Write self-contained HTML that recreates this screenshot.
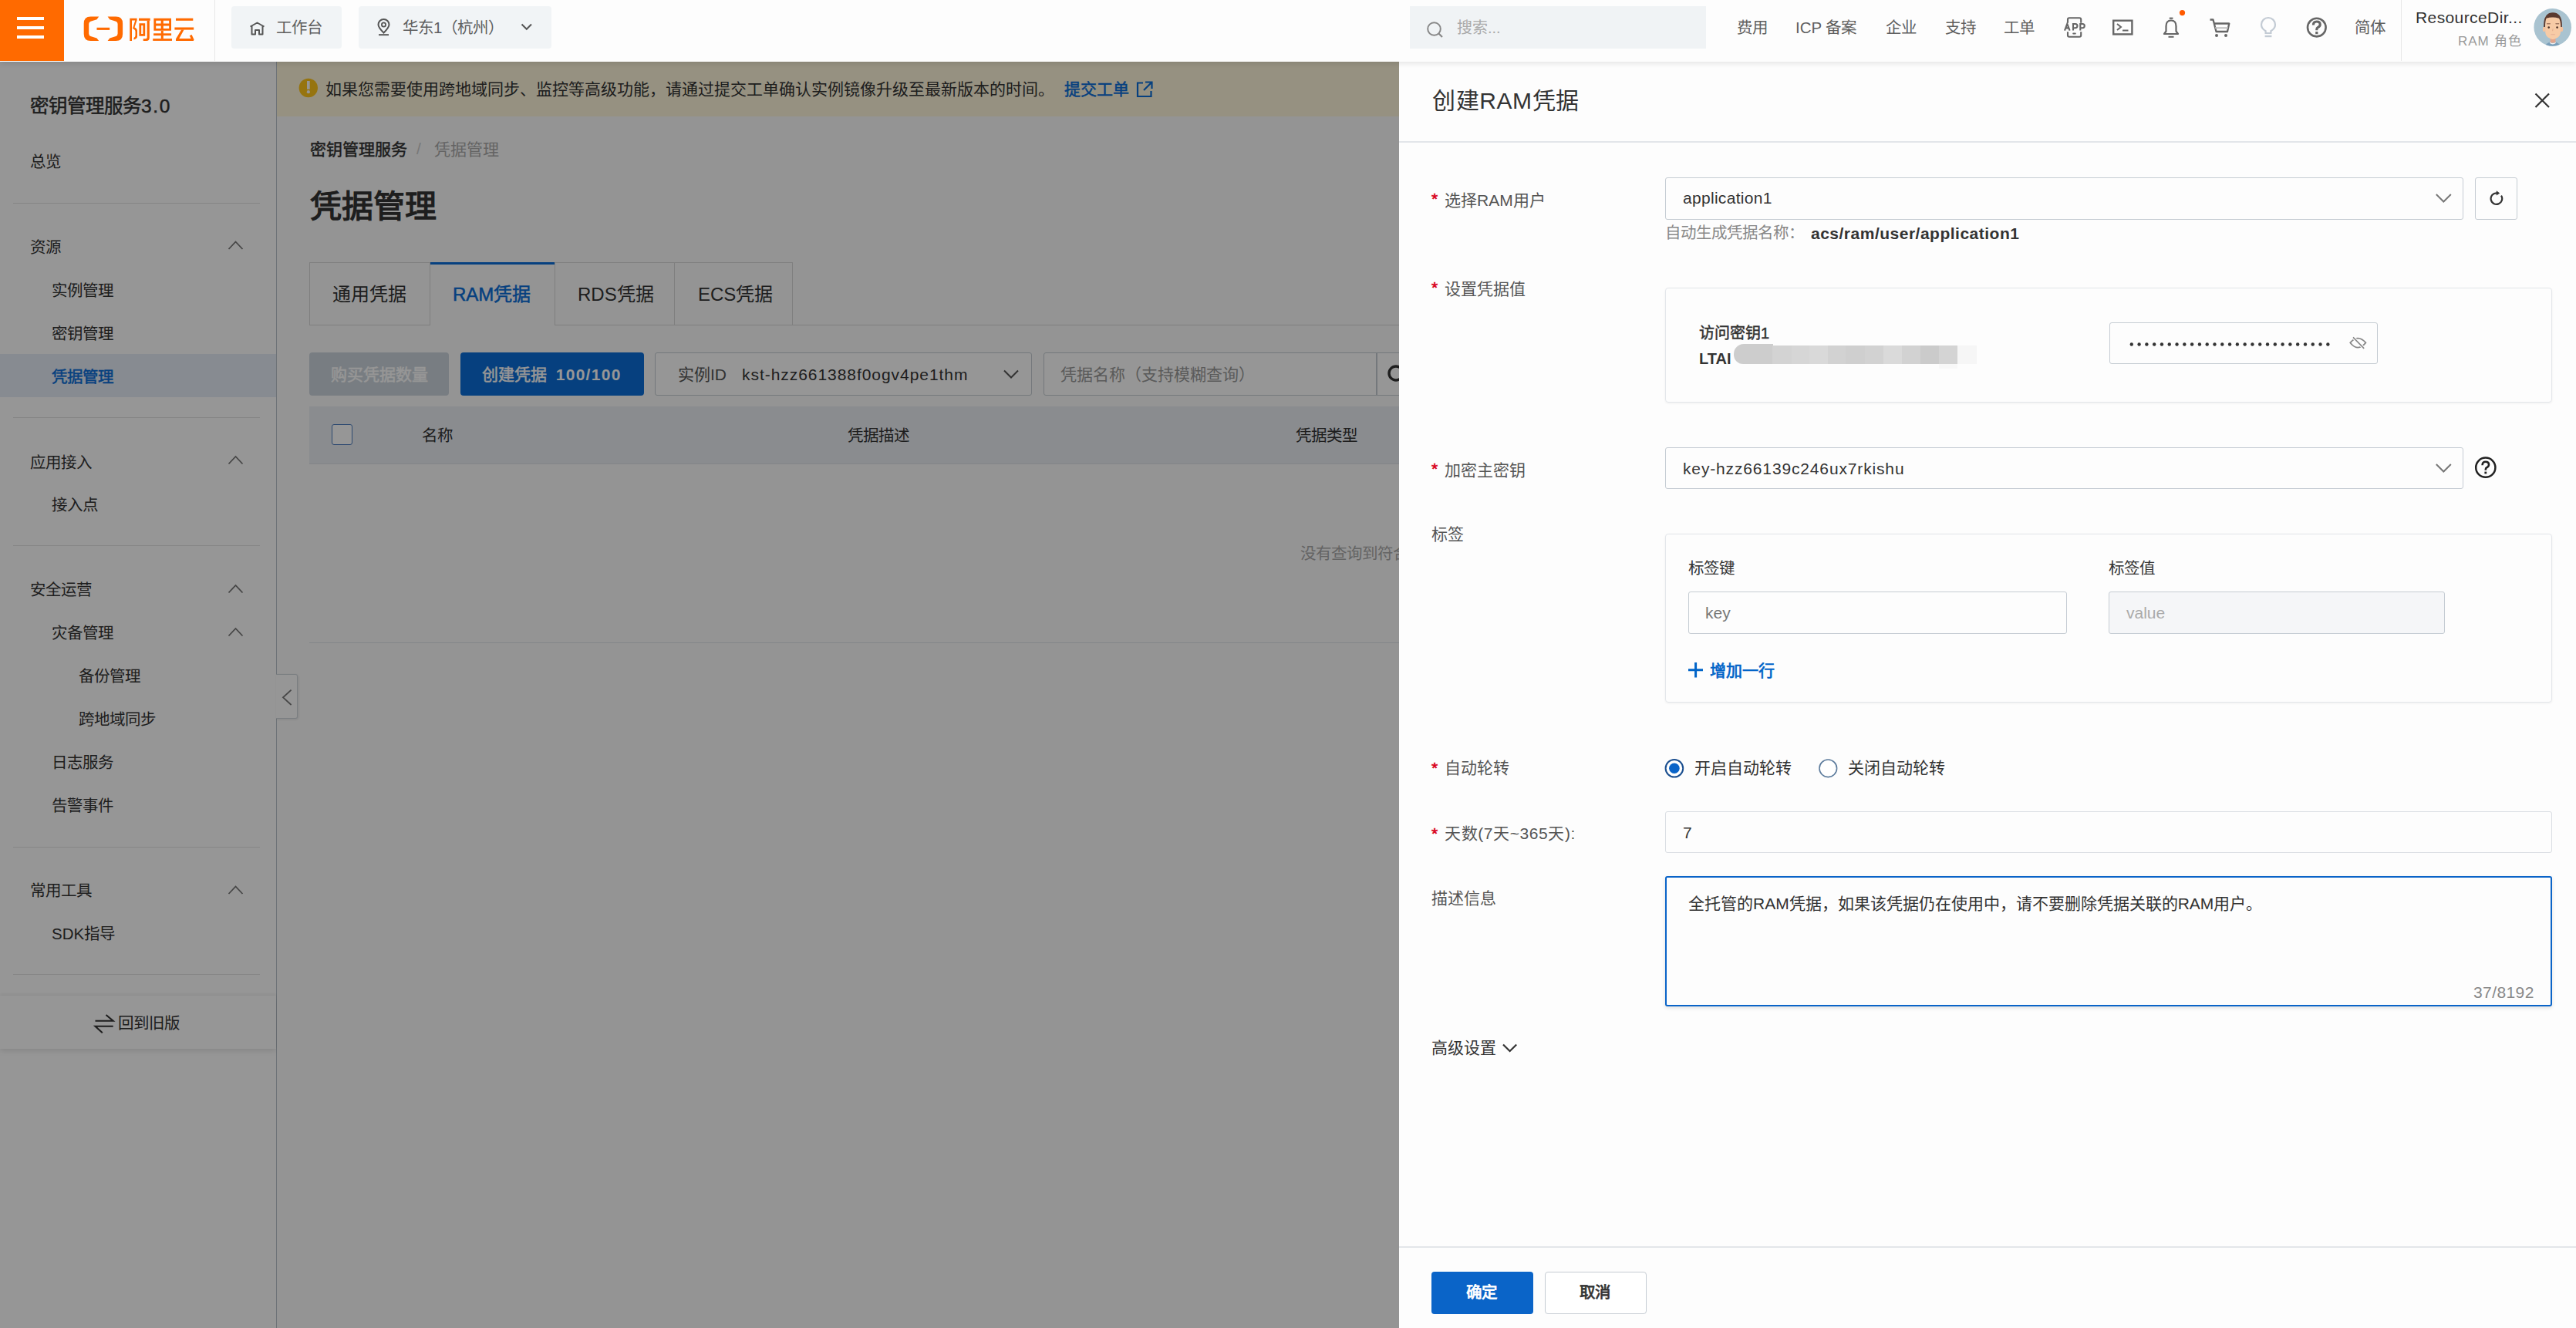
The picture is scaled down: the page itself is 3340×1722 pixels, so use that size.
<!DOCTYPE html>
<html lang="zh-CN"><head><meta charset="utf-8">
<style>
*{box-sizing:border-box;margin:0;padding:0}
html,body{width:3340px;height:1722px;overflow:hidden;background:#fff}
body{position:relative;font-family:"Liberation Sans",sans-serif;color:#333}
.a{position:absolute}
.t{position:absolute;white-space:nowrap;line-height:1}
svg{position:absolute;overflow:visible}
/* page under mask */
#page{position:absolute;left:0;top:0;width:3340px;height:1722px}
#side{position:absolute;left:0;top:0;width:359px;height:1722px;background:#fff;border-right:1px solid #bcc4cc}
#main{position:absolute;left:359px;top:79px;width:2981px;height:1643px;background:#fcfcfc}
#mask{position:absolute;left:0;top:79px;width:3340px;height:1643px;background:rgba(0,0,0,0.41)}
#top{position:absolute;left:0;top:0;width:3340px;height:79.5px;background:#fdfdfd;box-shadow:0 2px 7px rgba(0,0,0,0.11);z-index:5}
#drawer{position:absolute;left:1814px;top:79px;width:1526px;height:1643px;background:#fdfdfd;z-index:3}
</style></head><body>
<div id="page">
 <div id="side">
 <div class="t" id="sd_title" style="left:39px;top:126px;font-size:24.5px;-webkit-text-stroke-width:0.5px;color:#333">密钥管理服务<span style="letter-spacing:1.6px">3.0</span></div>
 <div class="t" style="left:39px;top:200px;font-size:20.5px;color:#333">总览</div>
 <div class="a" style="left:17px;top:263px;width:320px;height:1px;background:#e3e3e3"></div>
 <div class="t" style="left:39px;top:311px;font-size:20.5px;color:#333">资源</div>
 <div class="t" style="left:67px;top:367px;font-size:20.5px;color:#333">实例管理</div>
 <div class="t" style="left:67px;top:423px;font-size:20.5px;color:#333">密钥管理</div>
 <div class="a" style="left:0;top:459px;width:358px;height:56px;background:#e5ecf6"></div>
 <div class="t" style="left:67px;top:479px;font-size:20.5px;color:#0b6ed8;-webkit-text-stroke-width:0.5px">凭据管理</div>
 <div class="a" style="left:17px;top:541px;width:320px;height:1px;background:#e3e3e3"></div>
 <div class="t" style="left:39px;top:590px;font-size:20.5px;color:#333">应用接入</div>
 <div class="t" style="left:67px;top:645px;font-size:20.5px;color:#333">接入点</div>
 <div class="a" style="left:17px;top:707px;width:320px;height:1px;background:#e3e3e3"></div>
 <div class="t" style="left:39px;top:755px;font-size:20.5px;color:#333">安全运营</div>
 <div class="t" style="left:67px;top:811px;font-size:20.5px;color:#333">灾备管理</div>
 <div class="t" style="left:102px;top:867px;font-size:20.5px;color:#333">备份管理</div>
 <div class="t" style="left:102px;top:923px;font-size:20.5px;color:#333">跨地域同步</div>
 <div class="t" style="left:67px;top:979px;font-size:20.5px;color:#333">日志服务</div>
 <div class="t" style="left:67px;top:1035px;font-size:20.5px;color:#333">告警事件</div>
 <div class="a" style="left:17px;top:1098px;width:320px;height:1px;background:#e3e3e3"></div>
 <div class="t" style="left:39px;top:1145px;font-size:20.5px;color:#333">常用工具</div>
 <div class="t" style="left:67px;top:1201px;font-size:20.5px;color:#333">SDK指导</div>
 <div class="a" style="left:17px;top:1263px;width:320px;height:1px;background:#e3e3e3"></div>
 <div class="a" style="left:0;top:1291px;width:358px;height:69px;background:#fff;box-shadow:0 -2px 4px rgba(0,0,0,0.05),0 3px 7px rgba(0,0,0,0.1)"></div>
 <svg width="30" height="30" style="left:120px;top:1312px">
  <path d="M3.5,11.8 L26.7,11.8 L17.5,4 M26.7,18.7 L3.5,18.7 L12.8,27.2" fill="none" stroke="#333" stroke-width="2.1"/>
 </svg>
 <div class="t" style="left:153px;top:1317px;font-size:20.5px;color:#333">回到旧版</div>
 <svg width="360" height="1300" style="left:0;top:0">
  <g fill="none" stroke="#777" stroke-width="1.8">
   <path d="M296.5,323 L305.5,313.5 L314.5,323"/>
   <path d="M296.5,601.5 L305.5,592 L314.5,601.5"/>
   <path d="M296.5,768.5 L305.5,759 L314.5,768.5"/>
   <path d="M296.5,824.5 L305.5,815 L314.5,824.5"/>
   <path d="M296.5,1159 L305.5,1149.5 L314.5,1159"/>
  </g>
 </svg>
</div>
 <div id="main">
 <div class="a" style="left:0;top:0;width:2981px;height:72px;background:#fff7dc"></div>
 <svg width="30" height="30" style="left:25px;top:20px">
  <circle cx="15.8" cy="15" r="12.2" fill="#ffc61a"/>
  <rect x="14" y="6" width="3.7" height="10.8" fill="#fff"/>
  <circle cx="15.85" cy="20.2" r="2.1" fill="#fff"/>
 </svg>
 <div class="t" id="mn_banner" style="left:63px;top:26px;font-size:21px;color:#333">如果您需要使用跨地域同步、监控等高级功能，请通过提交工单确认实例镜像升级至最新版本的时间。</div>
 <div class="t" id="mn_link" style="left:1021px;top:26px;font-size:21px;color:#0b6ed8;-webkit-text-stroke-width:0.5px">提交工单</div>
 <svg width="30" height="30" style="left:1110px;top:22px">
  <path d="M13,6.5 L6,6.5 L6,24 L23.5,24 L23.5,17" fill="none" stroke="#0b6ed8" stroke-width="2.2"/>
  <path d="M16,5.5 L24.5,5.5 L24.5,14 M24.5,5.5 L14,16" fill="none" stroke="#0b6ed8" stroke-width="2.2"/>
 </svg>
 <div class="t" id="mn_bc1" style="left:43px;top:104px;font-size:21px;color:#333;-webkit-text-stroke-width:0.5px">密钥管理服务</div>
 <div class="t" style="left:181px;top:103px;font-size:21px;color:#ccc">/</div>
 <div class="t" id="mn_bc2" style="left:204px;top:104px;font-size:21px;color:#aaa">凭据管理</div>
 <div class="t" id="mn_title" style="left:43px;top:169px;font-size:41px;color:#333;font-weight:bold">凭据管理</div>
 <!-- tabs -->
 <div class="a" style="left:42px;top:261px;width:2939px;height:82px;border-bottom:1px solid #d9d9d9"></div>
 <div class="a" style="left:42px;top:261px;width:157px;height:82px;border:1px solid #d9d9d9;background:#fcfcfc"></div>
 <div class="a" style="left:199px;top:261px;width:161px;height:82px;border-top:3px solid #0b6ed8;background:#fcfcfc"></div>
 <div class="a" style="left:360px;top:261px;width:156px;height:82px;border:1px solid #d9d9d9;background:#fcfcfc"></div>
 <div class="a" style="left:515px;top:261px;width:154px;height:82px;border:1px solid #d9d9d9;background:#fcfcfc"></div>
 <div class="t" id="mn_tab1" style="top:291px;left:72px;font-size:24px;color:#333">通用凭据</div>
 <div class="t" id="mn_tab2" style="top:291px;left:228px;font-size:24px;color:#0b6ed8;-webkit-text-stroke-width:0.5px">RAM凭据</div>
 <div class="t" id="mn_tab3" style="top:291px;left:390px;font-size:24px;color:#333">RDS凭据</div>
 <div class="t" id="mn_tab4" style="top:291px;left:546px;font-size:24px;color:#333">ECS凭据</div>
 <!-- toolbar -->
 <div class="a" style="left:42px;top:378px;width:181px;height:56px;background:#cdd5dd;border-radius:4px"></div>
 <div class="t" id="mn_btn1" style="left:70px;top:396px;font-size:21px;color:#fff;-webkit-text-stroke-width:0.5px">购买凭据数量</div>
 <div class="a" style="left:238px;top:378px;width:238px;height:56px;background:#0b6ed8;border-radius:4px"></div>
 <div class="t" id="mn_btn2" style="left:266px;top:396px;font-size:21px;color:#fff;-webkit-text-stroke-width:0.5px">创建凭据&nbsp;&nbsp;<b style="letter-spacing:1.3px;-webkit-text-stroke-width:0">100/100</b></div>
 <div class="a" style="left:490px;top:378px;width:489px;height:56px;border:1.5px solid #c5ccd3;border-radius:3px;background:#fff"></div>
 <div class="t" id="mn_sel_l" style="left:520px;top:396px;font-size:21px;color:#555">实例ID</div>
 <div class="t" id="mn_sel_v" style="left:603px;top:396px;font-size:21px;letter-spacing:0.95px;color:#333">kst-hzz661388f0ogv4pe1thm</div>
 <svg width="30" height="30" style="left:938px;top:394px">
  <path d="M5,7.5 L14,16.5 L23,7.5" fill="none" stroke="#555" stroke-width="2"/>
 </svg>
 <div class="a" style="left:994px;top:378px;width:1987px;height:56px;border:1.5px solid #c5ccd3;border-radius:3px;background:#fff"></div>
 <div class="a" style="left:1425px;top:378px;width:1.5px;height:56px;background:#c5ccd3"></div>
 <div class="t" id="mn_srch" style="left:1016px;top:396px;font-size:21px;color:#999">凭据名称（支持模糊查询）</div>
 <svg width="40" height="40" style="left:1430px;top:388px">
  <circle cx="21" cy="17" r="9" fill="none" stroke="#333" stroke-width="3.4"/>
 </svg>
 <!-- table -->
 <div class="a" style="left:42px;top:448px;width:2939px;height:75px;background:#ebeff3;border-bottom:1px solid #dfe3e8"></div>
 <div class="a" style="left:71px;top:471px;width:27px;height:27px;border:1.8px solid #4d7cbf;border-radius:3px;background:#fff"></div>
 <div class="t" id="mn_th1" style="left:188px;top:476px;font-size:20.5px;color:#333">名称</div>
 <div class="t" id="mn_th2" style="left:740px;top:476px;font-size:20.5px;color:#333">凭据描述</div>
 <div class="t" id="mn_th3" style="left:1321px;top:476px;font-size:20.5px;color:#333">凭据类型</div>
 <div class="t" id="mn_empty" style="left:1327px;top:629px;font-size:20.5px;color:#aaa">没有查询到符合条件的记录</div>
 <div class="a" style="left:42px;top:754px;width:2939px;height:1px;background:#dfe3e8"></div>
 <!-- collapse handle -->
 <div class="a" style="left:-1px;top:795px;width:28px;height:58px;background:#fff;border:1px solid #d0d6dc;border-left:none;border-radius:0 3px 3px 0;box-shadow:1px 1px 3px rgba(0,0,0,0.1)"></div>
 <svg width="20" height="30" style="left:5px;top:810px">
  <path d="M13.6,5.6 L3,15.3 L13.6,25" fill="none" stroke="#777" stroke-width="1.8"/>
 </svg>
</div>
 <div id="mask"></div>
</div>

<div id="top">
 <div class="a" style="left:0;top:0;width:83px;height:79px;background:#ff6a00"></div>
 <div class="a" style="left:22px;top:22px;width:35px;height:3.5px;background:#fff"></div>
 <div class="a" style="left:22px;top:34px;width:35px;height:3.5px;background:#fff"></div>
 <div class="a" style="left:22px;top:46px;width:35px;height:3.5px;background:#fff"></div>
 <svg width="3340" height="79" style="left:0;top:0">
  <g fill="#ff6a00">
   <path d="M128.2,21.5 L117.5,21.5 Q108.7,21.5 108.7,30.5 L108.7,44 Q108.7,53 117.5,53 L128.2,53 L125.5,49.5 L117.5,47 Q115.2,46 115.2,43.5 L115.2,31 Q115.2,28.5 117.5,27.8 L125.5,25.2 Z"/>
   <path transform="translate(267.8,0) scale(-1,1)" d="M128.2,21.5 L117.5,21.5 Q108.7,21.5 108.7,30.5 L108.7,44 Q108.7,53 117.5,53 L128.2,53 L125.5,49.5 L117.5,47 Q115.2,46 115.2,43.5 L115.2,31 Q115.2,28.5 117.5,27.8 L125.5,25.2 Z"/>
   <rect x="125.5" y="35.8" width="16.7" height="3.1"/>
   <!-- 阿 -->
   <path d="M168.3,23.7 L177.6,23.7 L177.6,26.2 L174.5,35.5 Q178,37 178,40 L178,47.5 Q178,50 173.5,51.5 L173.5,49 Q175.5,48 175.5,46 L175.5,41 Q175.5,38.5 172,37 L175.2,26.4 L171,26.4 L171,52.9 L168.3,52.9 Z"/>
   <rect x="180" y="23.7" width="14.7" height="3.1"/>
   <path d="M190.7,26.8 L193.8,26.8 L193.8,49 Q193.8,52.9 189.8,52.9 L185.7,52.9 L185.7,50.3 L189,50.3 Q190.7,50.3 190.7,48.5 Z"/>
   <path fill-rule="evenodd" d="M180.4,30.2 L188.2,30.2 L188.2,46.7 L180.4,46.7 Z M183.2,33 L183.2,44 L185.4,44 L185.4,33 Z"/>
   <!-- 里 -->
   <path fill-rule="evenodd" d="M199.4,23.7 L222,23.7 L222,39.8 L199.4,39.8 Z M202.2,26.8 L202.2,30.5 L208.7,30.5 L208.7,26.8 Z M211.8,26.8 L211.8,30.5 L219.2,30.5 L219.2,26.8 Z M202.2,33.6 L202.2,37 L208.7,37 L208.7,33.6 Z M211.8,33.6 L211.8,37 L219.2,37 L219.2,33.6 Z"/>
   <rect x="208.8" y="39.8" width="3" height="10.5"/>
   <rect x="199.1" y="43.3" width="23" height="2.8"/>
   <rect x="198.2" y="50.1" width="24.8" height="2.8"/>
   <!-- 云 -->
   <rect x="228" y="23.7" width="22.3" height="3.1"/>
   <rect x="226.4" y="35.5" width="24.8" height="3.1"/>
   <path d="M235.2,38.6 L238.6,38.6 L232.3,50 L247.6,50 L245.8,46.2 L248.6,45 L251.6,51.5 L250.8,52.9 L228,52.9 L228,50.5 Z"/>
  </g>
 </svg>
 <div class="a" style="left:278px;top:0;width:1px;height:79px;background:#e8e8e8"></div>
 <!-- workbench -->
 <div class="a" style="left:300px;top:8px;width:143px;height:55px;background:#f1f4f6;border-radius:4px"></div>
 <svg width="30" height="30" style="left:318px;top:22px">
  <path d="M6.5,12.5 L15.5,7.5 L24.5,12.5 M8.5,11.5 L8.5,22.5 L13,22.5 L13,17 L18,17 L18,22.5 L22.5,22.5 L22.5,11.5" fill="none" stroke="#555" stroke-width="2" stroke-linejoin="round"/>
 </svg>
 <div class="t" id="tb_wb" style="left:358px;top:26px;font-size:20.5px;color:#5f5f5f">工作台</div>
 <!-- region -->
 <div class="a" style="left:465px;top:8px;width:250px;height:55px;background:#f1f4f6;border-radius:4px"></div>
 <svg width="30" height="30" style="left:482px;top:21px">
  <path d="M15.5,21.5 Q8.5,14.5 8.5,11 A7,7 0 0 1 22.5,11 Q22.5,14.5 15.5,21.5 Z" fill="none" stroke="#555" stroke-width="2"/>
  <circle cx="15.5" cy="11" r="2.6" fill="none" stroke="#555" stroke-width="1.8"/>
  <rect x="9" y="23.2" width="13" height="1.9" fill="#555"/>
 </svg>
 <div class="t" id="tb_rg" style="left:522px;top:26px;font-size:20.5px;color:#5f5f5f">华东1（杭州）</div>
 <svg width="20" height="20" style="left:673px;top:26px">
  <path d="M3.5,5.5 L9.8,11.8 L16,5.5" fill="none" stroke="#555" stroke-width="2"/>
 </svg>
 <!-- search -->
 <div class="a" style="left:1828px;top:8px;width:384px;height:55px;background:#f0f3f5"></div>
 <svg width="30" height="30" style="left:1846px;top:24px">
  <circle cx="13.5" cy="13.5" r="8.3" fill="none" stroke="#888" stroke-width="2"/>
  <path d="M19.5,19.5 L24,24" stroke="#888" stroke-width="2.2"/>
 </svg>
 <div class="t" id="tb_sr" style="left:1889px;top:26px;font-size:20px;color:#aaa">搜索...</div>
 <div class="t" id="tb_n1" style="left:2252px;top:26px;font-size:20.5px;color:#5f5f5f">费用</div>
 <div class="t" id="tb_n2" style="left:2328px;top:26px;font-size:20.5px;color:#5f5f5f">ICP 备案</div>
 <div class="t" id="tb_n3" style="left:2445px;top:26px;font-size:20.5px;color:#5f5f5f">企业</div>
 <div class="t" id="tb_n4" style="left:2522px;top:26px;font-size:20.5px;color:#5f5f5f">支持</div>
 <div class="t" id="tb_n5" style="left:2598px;top:26px;font-size:20.5px;color:#5f5f5f">工单</div>
 <svg width="3340" height="79" style="left:0;top:0">
  <!-- APP -->
  <g fill="none" stroke="#666" stroke-width="2.1">
   <path d="M2681,29.8 L2681,25.2 Q2681,23.2 2683,23.2 L2696.2,23.2 Q2698.2,23.2 2698.2,25.2 L2698.2,29.8"/>
   <path d="M2681,41.2 L2681,45.7 Q2681,47.7 2683,47.7 L2696.2,47.7 Q2698.2,47.7 2698.2,45.7 L2698.2,41.2"/>
   <path d="M2677,39.6 L2680.3,30.8 L2683.6,39.6 M2678.4,36.4 L2682.2,36.4"/>
   <path d="M2688,39.6 L2688,31 L2690.8,31 Q2693.5,31 2693.5,33.6 Q2693.5,36.2 2690.8,36.2 L2688,36.2"/>
   <path d="M2697.3,39.6 L2697.3,31 L2700.1,31 Q2702.8,31 2702.8,33.6 Q2702.8,36.2 2700.1,36.2 L2697.3,36.2"/>
  </g>
  <rect x="2687.2" y="42.4" width="4.6" height="2" rx="1" fill="#666"/>
  <!-- terminal -->
  <rect x="2740.2" y="26.7" width="24.2" height="17.7" fill="none" stroke="#666" stroke-width="2.4"/>
  <path d="M2745,31 L2750,35 L2745,39" fill="none" stroke="#666" stroke-width="2"/>
  <rect x="2752" y="38.5" width="7.5" height="2" fill="#666"/>
  <!-- bell -->
  <path d="M2806,44 L2824,44 L2821.5,40.5 L2821.5,34 Q2821.5,26.5 2815,26.5 Q2808.5,26.5 2808.5,34 L2808.5,40.5 Z" fill="none" stroke="#666" stroke-width="2.2" stroke-linejoin="round"/>
  <rect x="2812.8" y="22.6" width="4.6" height="2.2" fill="#666"/>
  <rect x="2811.5" y="46.8" width="7" height="2" fill="#666"/>
  <circle cx="2829.5" cy="16.6" r="3.6" fill="#ff5a00"/>
  <!-- cart -->
  <path d="M2865.5,25.5 L2869.5,25.5 L2873.5,41 L2888,41 L2890.3,30.5 L2871,30.5" fill="none" stroke="#666" stroke-width="2.3" stroke-linejoin="round"/>
  <path d="M2872,36.2 L2889,36.2" stroke="#bbb" stroke-width="1.8"/>
  <circle cx="2874" cy="46" r="2" fill="#666"/>
  <circle cx="2886" cy="46" r="2" fill="#666"/>
  <!-- bulb -->
  <path d="M2937.6,43 L2937.6,40.2 Q2932,36.8 2932,32 A9,9 0 0 1 2950,32 Q2950,36.8 2944.4,40.2 L2944.4,43 Z" fill="none" stroke="#c3cbd4" stroke-width="2.2"/>
  <rect x="2936.6" y="45.8" width="8.8" height="2.4" fill="#c3cbd4"/>
  <!-- help -->
  <circle cx="3003.8" cy="35.6" r="11.8" fill="none" stroke="#666" stroke-width="2.6"/>
  <path d="M2999.4,32.4 Q2999.4,28 3003.8,28 Q3008.2,28 3008.2,31.8 Q3008.2,34.3 3005.4,35.4 Q3003.8,36.2 3003.8,38.3 L3003.8,39.2" fill="none" stroke="#666" stroke-width="3.2"/>
  <rect x="3002.2" y="41" width="3.2" height="3.2" fill="#666"/>
 </svg>
 <div class="t" id="tb_n6" style="left:3053px;top:26px;font-size:20.5px;color:#5f5f5f">简体</div>
 <div class="a" style="left:3113px;top:0;width:1px;height:79px;background:#e8e8e8"></div>
 <div class="t" id="tb_u1" style="left:3132px;top:12px;font-size:21px;letter-spacing:0.4px;color:#333">ResourceDir...</div>
 <div class="t" id="tb_u2" style="left:3187px;top:45px;font-size:17px;letter-spacing:1px;color:#999">RAM 角色</div>
 <svg width="60" height="60" style="left:3280px;top:8px">
  <defs><clipPath id="avc"><circle cx="29.7" cy="27.4" r="24.3"/></clipPath></defs>
  <circle cx="29.7" cy="27.4" r="24.3" fill="#a9c3d0"/>
  <g clip-path="url(#avc)">
   <path d="M19.5,52 Q22,46.8 29.8,45.8 Q37.6,46.8 40.2,52 L40.2,56 L19.5,56 Z" fill="#7a9fba"/>
   <path d="M26.2,47.2 Q29.9,50.2 33.6,47.2" fill="none" stroke="#eef2f4" stroke-width="1.6"/>
   <rect x="26.6" y="41" width="6.9" height="6.6" rx="1" fill="#e3a68d"/>
   <ellipse cx="18.7" cy="29.9" rx="1.9" ry="3.1" fill="#f3c29f"/>
   <ellipse cx="41.3" cy="29.9" rx="1.9" ry="3.1" fill="#f3c29f"/>
   <path d="M20.2,13.5 L40,13.5 L40,33 Q40,37.5 36.5,40.5 L31.8,42.8 Q30,43.4 28.2,42.8 L23.7,40.5 Q20.2,37.5 20.2,33 Z" fill="#f7cba6"/>
   <path d="M18.1,27 Q17.6,8.2 29.9,8.2 Q42.5,8.2 41.9,27 L40.3,27 Q40,19 38,15.8 Q33,14.2 29.9,14.4 Q25.6,14.2 21.6,15.8 Q20,19 19.9,27 Z" fill="#5a3a30"/>
   <rect x="21.9" y="21.9" width="5" height="1.5" rx="0.7" fill="#a57b63"/>
   <rect x="33.3" y="21.9" width="5" height="1.5" rx="0.7" fill="#a57b63"/>
   <circle cx="24.7" cy="27.6" r="1.3" fill="#4a3026"/>
   <circle cx="35.6" cy="27.6" r="1.3" fill="#4a3026"/>
   <path d="M30.1,29.2 L29.6,32.2" stroke="#e0a98c" stroke-width="0.9"/>
   <path d="M27.4,36.8 L32.8,36.8" stroke="#e6b196" stroke-width="1.1"/>
  </g>
 </svg>
</div>
</div>

<div id="drawer">
 <div class="t" id="dr_title" style="left:43px;top:37px;font-size:30px;letter-spacing:0.6px;color:#333">创建RAM凭据</div>
 <svg width="30" height="30" style="left:1466px;top:35px">
  <path d="M7.5,7.5 L25,25 M25,7.5 L7.5,25" fill="none" stroke="#333" stroke-width="2.2"/>
 </svg>
 <div class="a" style="left:0;top:104px;width:1526px;height:1.5px;background:#e3e6ea"></div>
 <!-- row1 -->
 <div class="t" style="left:42px;top:168px;font-size:21px;color:#d9001b;-webkit-text-stroke-width:0.6px">*</div>
 <div class="t" id="dr_l1" style="left:59px;top:170px;font-size:21px;color:#555">选择RAM用户</div>
 <div class="a" style="left:345px;top:151px;width:1035px;height:55px;border:1.5px solid #c5ccd3;border-radius:3px"></div>
 <div class="t" id="dr_v1" style="left:368px;top:167px;font-size:21px;letter-spacing:0.3px;color:#333">application1</div>
 <svg width="30" height="30" style="left:1340px;top:165px">
  <path d="M4.8,8 L14.3,17.5 L23.8,8" fill="none" stroke="#777" stroke-width="2"/>
 </svg>
 <div class="a" style="left:1395px;top:151px;width:55px;height:55px;border:1.5px solid #c5ccd3;border-radius:3px"></div>
 <svg width="30" height="30" style="left:1407px;top:163px">
  <path d="M22.0,11.6 A7.3,7.3 0 1 1 16.2,8.3" fill="none" stroke="#333" stroke-width="2.2"/>
  <path d="M15.8,5.2 L20.2,8.4 L15.8,11.6 Z" fill="#333"/>
 </svg>
 <div class="t" id="dr_h1" style="left:345px;top:213px;font-size:20.5px;color:#888">自动生成凭据名称：</div>
 <div class="t" id="dr_h2" style="left:534px;top:213px;font-size:21px;letter-spacing:0.5px;color:#333;font-weight:bold">acs/ram/user/application1</div>
 <!-- row2 -->
 <div class="t" style="left:42px;top:283px;font-size:21px;color:#d9001b;-webkit-text-stroke-width:0.6px">*</div>
 <div class="t" id="dr_l2" style="left:59px;top:285px;font-size:21px;color:#555">设置凭据值</div>
 <div class="a" style="left:345px;top:294px;width:1150px;height:149px;border:1.5px solid #e3e6ea;border-radius:4px;box-shadow:0 1px 3px rgba(0,0,0,0.06)"></div>
 <div class="t" id="dr_ak" style="left:389px;top:343px;font-size:20px;color:#333;-webkit-text-stroke-width:0.5px">访问密钥1</div>
 <div class="t" id="dr_ltai" style="left:389px;top:376px;font-size:20px;color:#333;font-weight:bold">LTAI</div>
 <div class="a" style="left:433.7px;top:367.4px;width:51.0px;height:25.2px;background:#cdcdcd;border-radius:13px 0 0 12px"></div>
 <div class="a" style="left:484.2px;top:369.3px;width:24.8px;height:23.3px;background:#d3d3d3"></div>
 <div class="a" style="left:508.5px;top:369.3px;width:23.7px;height:23.3px;background:#d6d6d6"></div>
 <div class="a" style="left:531.7px;top:369.3px;width:24.8px;height:23.3px;background:#d9d9d9"></div>
 <div class="a" style="left:556.0px;top:369.3px;width:23.8px;height:23.3px;background:#d2d2d2"></div>
 <div class="a" style="left:579.3px;top:369.3px;width:24.8px;height:23.3px;background:#cfcfcf"></div>
 <div class="a" style="left:603.6px;top:369.3px;width:24.7px;height:23.3px;background:#d2d2d2"></div>
 <div class="a" style="left:627.8px;top:369.3px;width:24.7px;height:23.3px;background:#dadada"></div>
 <div class="a" style="left:652.0px;top:369.3px;width:24.9px;height:23.3px;background:#d2d2d2"></div>
 <div class="a" style="left:676.4px;top:369.3px;width:23.7px;height:23.3px;background:#cbcbcb"></div>
 <div class="a" style="left:699.6px;top:369.3px;width:24.9px;height:23.3px;background:#d4d4d4"></div>
 <div class="a" style="left:724.0px;top:369.3px;width:24.5px;height:23.3px;background:#f6f6f6"></div>
 <div class="a" style="left:699.6px;top:392.6px;width:24.4px;height:6px;background:#f8f8f8"></div>
 <div class="a" style="left:921px;top:338.6px;width:348px;height:54.2px;border:1.5px solid #c5ccd3;border-radius:3px"></div>
 <svg width="300" height="30" style="left:940px;top:352px">
  <g fill="#333"><circle cx="9.80" cy="15.5" r="2.2"/><circle cx="19.59" cy="15.5" r="2.2"/><circle cx="29.38" cy="15.5" r="2.2"/><circle cx="39.17" cy="15.5" r="2.2"/><circle cx="48.96" cy="15.5" r="2.2"/><circle cx="58.75" cy="15.5" r="2.2"/><circle cx="68.54" cy="15.5" r="2.2"/><circle cx="78.33" cy="15.5" r="2.2"/><circle cx="88.12" cy="15.5" r="2.2"/><circle cx="97.91" cy="15.5" r="2.2"/><circle cx="107.70" cy="15.5" r="2.2"/><circle cx="117.49" cy="15.5" r="2.2"/><circle cx="127.28" cy="15.5" r="2.2"/><circle cx="137.07" cy="15.5" r="2.2"/><circle cx="146.86" cy="15.5" r="2.2"/><circle cx="156.65" cy="15.5" r="2.2"/><circle cx="166.44" cy="15.5" r="2.2"/><circle cx="176.23" cy="15.5" r="2.2"/><circle cx="186.02" cy="15.5" r="2.2"/><circle cx="195.81" cy="15.5" r="2.2"/><circle cx="205.60" cy="15.5" r="2.2"/><circle cx="215.39" cy="15.5" r="2.2"/><circle cx="225.18" cy="15.5" r="2.2"/><circle cx="234.97" cy="15.5" r="2.2"/><circle cx="244.76" cy="15.5" r="2.2"/><circle cx="254.55" cy="15.5" r="2.2"/><circle cx="264.34" cy="15.5" r="2.2"/></g>
 </svg>
 <svg width="30" height="30" style="left:1229px;top:351px">
  <path d="M4.3,14.4 Q14.35,2.8 24.4,14.4 Q14.35,26.8 4.3,14.4 Z" fill="none" stroke="#888" stroke-width="1.7"/>
  <path d="M8,7.4 L22.2,21.9" stroke="#fdfdfd" stroke-width="4"/>
  <path d="M8,7.4 L22.2,21.9" stroke="#888" stroke-width="1.6"/>
 </svg>
 <!-- row3 -->
 <div class="t" style="left:42px;top:518px;font-size:21px;color:#d9001b;-webkit-text-stroke-width:0.6px">*</div>
 <div class="t" id="dr_l3" style="left:59px;top:520px;font-size:21px;color:#555">加密主密钥</div>
 <div class="a" style="left:345px;top:501px;width:1035px;height:54.3px;border:1.5px solid #c5ccd3;border-radius:3px"></div>
 <div class="t" id="dr_v3" style="left:368px;top:518px;font-size:21px;letter-spacing:0.85px;color:#333">key-hzz66139c246ux7rkishu</div>
 <svg width="30" height="30" style="left:1340px;top:515px">
  <path d="M4.8,8 L14.3,17.5 L23.8,8" fill="none" stroke="#777" stroke-width="2"/>
 </svg>
 <svg width="40" height="40" style="left:1390px;top:507px">
  <circle cx="18.8" cy="20.2" r="12.6" fill="none" stroke="#222" stroke-width="2.5"/>
  <path d="M14.6,17.3 Q14.6,12.8 18.8,12.8 Q23,12.8 23,16.6 Q23,19 20.3,20.2 Q18.8,21 18.8,23 L18.8,23.8" fill="none" stroke="#222" stroke-width="2.6"/>
  <rect x="17.4" y="25.6" width="2.8" height="2.8" fill="#222"/>
 </svg>
 <!-- row4 tags -->
 <div class="t" id="dr_l4" style="left:42px;top:603px;font-size:21px;color:#555">标签</div>
 <div class="a" style="left:345px;top:613px;width:1150px;height:219px;border:1.5px solid #e3e6ea;border-radius:4px;box-shadow:0 1px 3px rgba(0,0,0,0.06)"></div>
 <div class="t" id="dr_tk" style="left:375px;top:648px;font-size:20.5px;color:#333">标签键</div>
 <div class="t" id="dr_tv" style="left:920px;top:648px;font-size:20.5px;color:#333">标签值</div>
 <div class="a" style="left:375px;top:688px;width:491px;height:55px;border:1.5px solid #c5ccd3;border-radius:3px"></div>
 <div class="t" id="dr_key" style="left:397px;top:705px;font-size:21px;color:#777">key</div>
 <div class="a" style="left:920px;top:688px;width:436px;height:55px;border:1.5px solid #c5ccd3;border-radius:3px;background:#f5f6f8"></div>
 <div class="t" id="dr_val" style="left:943px;top:705px;font-size:21px;color:#aaa">value</div>
 <svg width="30" height="30" style="left:372px;top:777px">
  <path d="M3,12.8 L22,12.8 M12.6,3 L12.6,22.6" stroke="#0064c8" stroke-width="3"/>
 </svg>
 <div class="t" id="dr_add" style="left:403px;top:780px;font-size:21px;color:#0064c8;-webkit-text-stroke-width:0.7px">增加一行</div>
 <!-- row5 -->
 <div class="t" style="left:42px;top:906px;font-size:21px;color:#d9001b;-webkit-text-stroke-width:0.6px">*</div>
 <div class="t" id="dr_l5" style="left:59px;top:906px;font-size:21px;color:#555">自动轮转</div>
 <svg width="400" height="40" style="left:340px;top:896px">
  <circle cx="16.9" cy="21.3" r="11.3" fill="#fff" stroke="#1b4f8f" stroke-width="2"/>
  <circle cx="16.9" cy="21.3" r="6.8" fill="#0a64c8"/>
  <circle cx="216.3" cy="21.3" r="11.3" fill="#fff" stroke="#5c7b9c" stroke-width="1.6"/>
 </svg>
 <div class="t" id="dr_r1" style="left:383px;top:906px;font-size:21px;color:#333">开启自动轮转</div>
 <div class="t" id="dr_r2" style="left:582px;top:906px;font-size:21px;color:#333">关闭自动轮转</div>
 <!-- row6 -->
 <div class="t" style="left:42px;top:991px;font-size:21px;color:#d9001b;-webkit-text-stroke-width:0.6px">*</div>
 <div class="t" id="dr_l6" style="left:59px;top:991px;font-size:21px;letter-spacing:0.6px;color:#555">天数(7天~365天):</div>
 <div class="a" style="left:345px;top:973px;width:1150px;height:54px;border:1.5px solid #dadee3;border-radius:3px"></div>
 <div class="t" id="dr_v6" style="left:368px;top:990px;font-size:21px;color:#333">7</div>
 <!-- row7 -->
 <div class="t" id="dr_l7" style="left:42px;top:1075px;font-size:21px;color:#555">描述信息</div>
 <div class="a" style="left:345px;top:1057px;width:1150px;height:169px;border:2px solid #0a64c8;border-radius:3px;box-shadow:0 2px 5px rgba(0,0,0,0.12)"></div>
 <div class="t" id="dr_desc" style="left:375px;top:1082px;font-size:21px;color:#333">全托管的RAM凭据，如果该凭据仍在使用中，请不要删除凭据关联的RAM用户。</div>
 <div class="t" id="dr_cnt" style="left:1393px;top:1197px;font-size:21px;letter-spacing:0.4px;color:#888">37/8192</div>
 <!-- advanced -->
 <div class="t" id="dr_adv" style="left:42px;top:1269px;font-size:21px;color:#333">高级设置</div>
 <svg width="30" height="30" style="left:130px;top:1268px">
  <path d="M5,7.5 L13.6,16 L22.2,7.5" fill="none" stroke="#333" stroke-width="2.2"/>
 </svg>
 <!-- footer -->
 <div class="a" style="left:0;top:1537px;width:1526px;height:1.5px;background:#e3e6ea"></div>
 <div class="a" style="left:42px;top:1569.5px;width:132px;height:55px;background:#0a64c8;border-radius:4px"></div>
 <div class="t" id="dr_ok" style="left:87px;top:1587px;font-size:20.5px;color:#fff;-webkit-text-stroke-width:0.8px">确定</div>
 <div class="a" style="left:188.5px;top:1569.5px;width:132px;height:55px;border:1.5px solid #c5ccd3;border-radius:4px;background:#fff"></div>
 <div class="t" id="dr_cc" style="left:234px;top:1587px;font-size:20.5px;color:#333;-webkit-text-stroke-width:0.8px">取消</div>
</div>
</body></html>
